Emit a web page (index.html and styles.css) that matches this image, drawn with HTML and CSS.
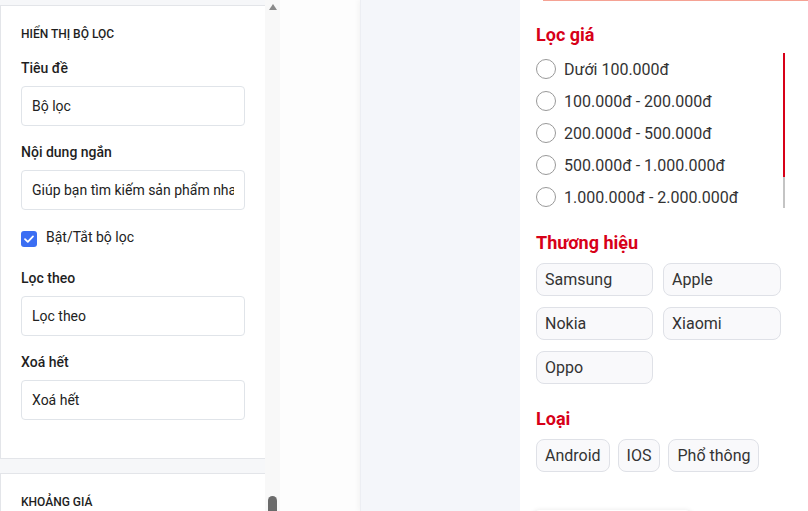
FILE: index.html
```html
<!DOCTYPE html>
<html lang="vi">
<head>
<meta charset="utf-8">
<title>Bộ lọc</title>
<link rel="stylesheet" href="styles.css">
</head>
<body>
<div class="sidebar">
  <div class="sidebar-content">
    <section class="panel">
      <h3 class="panel-title">HIỂN THỊ BỘ LỌC</h3>
      <div class="field">
        <label class="field-label">Tiêu đề</label>
        <div class="input"><span class="input-text">Bộ lọc</span></div>
      </div>
      <div class="field">
        <label class="field-label">Nội dung ngắn</label>
        <div class="input"><span class="input-text">Giúp bạn tìm kiếm sản phẩm nhanh hơn</span></div>
      </div>
      <div class="check-row">
        <span class="checkbox"><svg width="16" height="16" viewBox="0 0 16 16"><polyline points="4,8.2 6.8,10.8 12,5.4" fill="none" stroke="#fff" stroke-width="1.8" stroke-linecap="round" stroke-linejoin="round"/></svg></span>
        <span class="check-text">Bật/Tắt bộ lọc</span>
      </div>
      <div class="field field-after-check">
        <label class="field-label">Lọc theo</label>
        <div class="input"><span class="input-text">Lọc theo</span></div>
      </div>
      <div class="field">
        <label class="field-label">Xoá hết</label>
        <div class="input"><span class="input-text">Xoá hết</span></div>
      </div>
    </section>
    <section class="panel">
      <h3 class="panel-title">KHOẢNG GIÁ</h3>
      <div class="field">
        <label class="field-label">Tiêu đề</label>
        <div class="input"><span class="input-text">Lọc giá</span></div>
      </div>
    </section>
  </div>
  <div class="scrollbar">
    <span class="scroll-arrow"></span>
    <span class="scroll-thumb"></span>
  </div>
</div>
<div class="gutter"></div>
<div class="canvas"></div>
<div class="filter">
  <div class="top-edge"></div>
  <div class="filter-body">
    <h2 class="filter-heading">Lọc giá</h2>
    <div class="radio-box">
      <div class="radio-list">
        <div class="radio-item"><span class="radio"></span>Dưới 100.000đ</div>
        <div class="radio-item"><span class="radio"></span>100.000đ - 200.000đ</div>
        <div class="radio-item"><span class="radio"></span>200.000đ - 500.000đ</div>
        <div class="radio-item"><span class="radio"></span>500.000đ - 1.000.000đ</div>
        <div class="radio-item"><span class="radio"></span>1.000.000đ - 2.000.000đ</div>
        <div class="radio-item"><span class="radio"></span>Trên 2.000.000đ</div>
      </div>
      <div class="mini-track"><span class="mini-thumb"></span></div>
    </div>
    <h2 class="filter-heading section-gap">Thương hiệu</h2>
    <div class="brand-grid">
      <span class="chip">Samsung</span>
      <span class="chip">Apple</span>
      <span class="chip">Nokia</span>
      <span class="chip">Xiaomi</span>
      <span class="chip">Oppo</span>
    </div>
    <h2 class="filter-heading section-gap">Loại</h2>
    <div class="chip-row">
      <span class="chip">Android</span>
      <span class="chip">IOS</span>
      <span class="chip">Phổ thông</span>
    </div>
    <div class="next-card"></div>
  </div>
</div>
</body>
</html>
```
FILE: styles.css
```css
* { box-sizing: border-box; }
html, body { margin: 0; padding: 0; }
body {
  width: 808px;
  height: 511px;
  overflow: hidden;
  display: flex;
  font-family: Roboto, "Noto Sans", "Liberation Sans", sans-serif;
  background: #fdfdfd;
}

/* Sidebar */
.sidebar {
  width: 280px;
  height: 511px;
  display: flex;
  flex-shrink: 0;
  overflow: hidden;
}
.sidebar-content {
  width: 265px;
  background: #f6f7f9;
  padding-top: 5px;
  display: flex;
  flex-direction: column;
  gap: 14px;
}
.panel {
  background: #fff;
  border: 1px solid #e3e5e9;
  border-right: none;
  padding: 20px 20px 38px 20px;
  flex-shrink: 0;
}
.panel-title {
  margin: 0;
  font-size: 12px;
  line-height: 16px;
  font-weight: 500;
  color: #1e1e1e;
}
.field { margin-top: 16px; }
.field-after-check { margin-top: 21px; }
.field-label {
  display: block;
  font-size: 14px;
  line-height: 20px;
  font-weight: 500;
  color: #1f1f1f;
  margin-bottom: 8px;
}
.input {
  height: 40px;
  border: 1px solid #e0e4e9;
  border-radius: 4px;
  padding: 0 10px;
  display: flex;
  align-items: center;
  font-size: 14px;
  color: #222;
}
.input-text {
  display: block;
  width: 100%;
  white-space: nowrap;
  overflow: hidden;
}
.check-row {
  margin-top: 17px;
  display: flex;
  align-items: flex-start;
  gap: 9px;
}
.checkbox {
  width: 16px;
  height: 16px;
  margin-top: 4px;
  border-radius: 3px;
  background: #3b6ef3;
  display: flex;
}
.check-text {
  font-size: 14px;
  line-height: 20px;
  color: #222;
}

.scrollbar {
  width: 15px;
  background: #f8f8f8;
  display: flex;
  flex-direction: column;
  align-items: center;
}
.scroll-arrow {
  margin-top: 4px;
  width: 0;
  height: 0;
  border-left: 4.5px solid transparent;
  border-right: 4.5px solid transparent;
  border-bottom: 6px solid #8a8a8a;
}
.scroll-thumb {
  margin-top: auto;
  width: 9px;
  height: 15px;
  border-radius: 5px 5px 0 0;
  background: #6a6a6a;
}

/* middle */
.gutter {
  width: 80px;
  flex-shrink: 0;
  background: #fdfdfd;
}
.canvas {
  width: 160px;
  flex-shrink: 0;
  background: #f4f6fa;
  box-shadow: inset 1px 0 0 #eceef3, -2px 0 5px rgba(0, 0, 0, 0.04);
}

/* filter preview */
.filter {
  width: 288px;
  flex-shrink: 0;
  background: #fff;
  display: flex;
  flex-direction: column;
}
.top-edge {
  flex-shrink: 0;
  height: 1px;
  margin-left: 23px;
  background: #f5a294;
}
.filter-body {
  flex-shrink: 0;
  padding: 22px 23px 0 16px;
}
.filter-heading {
  margin: 0;
  font-size: 18px;
  line-height: 24px;
  font-weight: 700;
  color: #d70018;
}
.section-gap { margin-top: 23px; }
.radio-box {
  margin-top: 6px;
  height: 155px;
  display: flex;
}
.radio-list {
  flex: 1;
  overflow: hidden;
}
.mini-track {
  width: 2px;
  height: 155px;
  background: #c4c4c4;
  display: flex;
  flex-direction: column;
}
.mini-thumb {
  height: 124px;
  background: #d70018;
}
.radio-item {
  height: 32px;
  display: flex;
  align-items: center;
  gap: 8px;
  font-size: 16px;
  color: #333;
  white-space: nowrap;
}
.radio {
  width: 20px;
  height: 20px;
  border-radius: 50%;
  border: 1.5px solid #999;
  flex-shrink: 0;
}
.brand-grid {
  margin-top: 8px;
  display: grid;
  grid-template-columns: 117px 118px;
  column-gap: 10px;
  row-gap: 11px;
}
.chip {
  display: inline-block;
  border: 1px solid #dfe1e7;
  background: #f9f9fb;
  border-radius: 8px;
  padding: 6px 8px;
  font-size: 16px;
  line-height: 19px;
  color: #333;
  white-space: nowrap;
}
.chip-row {
  margin-top: 8px;
  display: flex;
  gap: 8px;
}
.next-card {
  margin-top: 38px;
  margin-left: -4px;
  width: 161px;
  height: 60px;
  border-radius: 8px;
  background: #fff;
  box-shadow: 0 0 5px rgba(0, 0, 0, 0.09);
}
```
